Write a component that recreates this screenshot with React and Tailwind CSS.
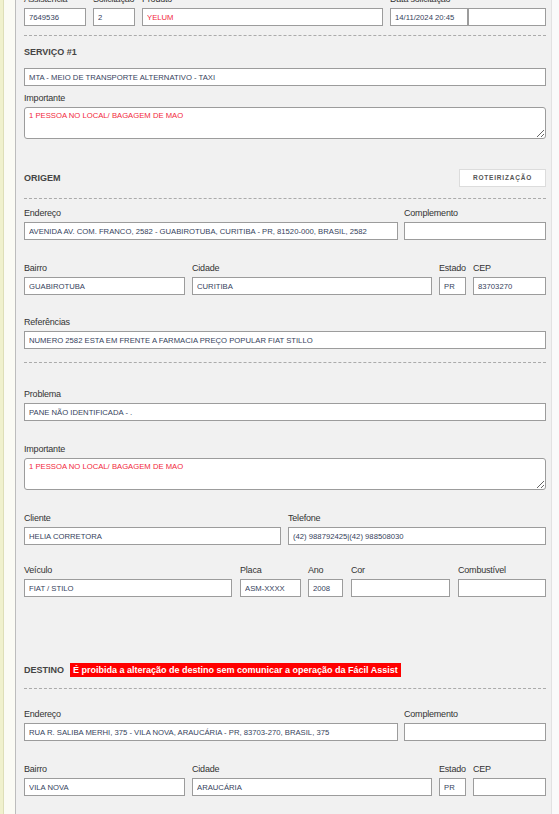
const Label = ({ children }) => (
  <div className="h-[12px] leading-[12px] text-[9px] tracking-[-0.2px] text-[#333] whitespace-nowrap">{children}</div>
);

const Box = ({ value = "", red = false, className = "" }) => (
  <input
    readOnly
    defaultValue={value}
    className={
      "block w-full h-[18px] border border-[#9c9c9c] bg-white px-[4px] text-[7.7px] outline-none " +
      (red ? "text-[#f2283c] " : "text-[#363f5c] ") +
      className
    }
  />
);

const Area = ({ value }) => (
  <textarea
    readOnly
    defaultValue={value}
    className="block w-full h-[32px] rounded-[3px] border border-[#9c9c9c] bg-white px-[4px] pt-[2px] text-[7.7px] leading-[11px] text-[#f2283c] outline-none"
  />
);

const Field = ({ label, value, red, className = "" }) => (
  <div className={"flex flex-col shrink-0 " + className}>
    <Label>{label}</Label>
    <div className="mt-[3px]">
      <Box value={value} red={red} />
    </div>
  </div>
);

const Dashed = ({ className = "" }) => (
  <div className={"border-t border-dashed border-[#ababab] " + className} />
);

const Heading = ({ children }) => (
  <div className="text-[9px] font-bold text-[#444] leading-[12px]">{children}</div>
);

export default function App() {
  return (
    <div className="flex min-h-[814px] w-full overflow-hidden font-['Liberation_Sans',Arial,sans-serif]">
      <div className="w-[3px] shrink-0 bg-[#f0f1cd]" />
      <div className="w-px shrink-0 bg-[#dedfb8]" />
      <div className="w-[11px] shrink-0 bg-[#fbfbf4]" />
      <div className="flex-1 border-x border-l-[#bdbdbd] border-r-[#e2e2e2] bg-[#f1f1f1] pl-[8px] pr-[5px] pb-[30px]">
        {/* top row */}
        <div className="mt-[-7px] flex">
          <Field label="Assistência" value="7649536" className="w-[62px]" />
          <Field label="Solicitação" value="2" className="w-[42px] ml-[7px]" />
          <Field label="Produto" value="YELUM" red className="w-[241px] ml-[7px]" />
          <div className="ml-[7px] flex flex-col">
            <Label>Data solicitação</Label>
            <div className="mt-[3px] flex">
              <div className="w-[78px]"><Box value="14/11/2024 20:45" /></div>
              <div className="w-[78px]"><Box /></div>
            </div>
          </div>
        </div>

        <Dashed className="mt-[9px]" />

        <div className="mt-[10px]"><Heading>SERVIÇO #1</Heading></div>
        <div className="mt-[10px]">
          <Box value="MTA - MEIO DE TRANSPORTE ALTERNATIVO - TAXI" />
        </div>
        <div className="mt-[6px]">
          <Label>Importante</Label>
          <div className="mt-[3px]"><Area value="1 PESSOA NO LOCAL/ BAGAGEM DE MAO" /></div>
        </div>

        {/* origem */}
        <div className="mt-[30px] flex h-[18px] items-center justify-between">
          <Heading>ORIGEM</Heading>
          <button className="h-[18px] w-[87px] border border-[#dcdcdc] bg-white text-[6.5px] font-bold tracking-[0.8px] text-[#555]">
            ROTEIRIZAÇÃO
          </button>
        </div>
        <Dashed className="mt-[11px]" />

        <div className="mt-[8px] flex">
          <Field label="Endereço" value="AVENIDA AV. COM. FRANCO, 2582 - GUABIROTUBA, CURITIBA - PR, 81520-000, BRASIL, 2582" className="w-[374px]" />
          <Field label="Complemento" className="w-[142px] ml-[6px]" />
        </div>
        <div className="mt-[22px] flex">
          <Field label="Bairro" value="GUABIROTUBA" className="w-[161px]" />
          <Field label="Cidade" value="CURITIBA" className="w-[240px] ml-[7px]" />
          <Field label="Estado" value="PR" className="w-[27px] ml-[7px]" />
          <Field label="CEP" value="83703270" className="w-[73px] ml-[7px]" />
        </div>
        <div className="mt-[21px]">
          <Field label="Referências" value="NUMERO 2582 ESTA EM FRENTE A FARMACIA PREÇO POPULAR FIAT STILLO" />
        </div>

        <Dashed className="mt-[13px]" />

        <div className="mt-[25px]">
          <Field label="Problema" value="PANE NÃO IDENTIFICADA - ." />
        </div>
        <div className="mt-[22px]">
          <Label>Importante</Label>
          <div className="mt-[3px]"><Area value="1 PESSOA NO LOCAL/ BAGAGEM DE MAO" /></div>
        </div>
        <div className="mt-[22px] flex">
          <Field label="Cliente" value="HELIA CORRETORA" className="w-[257px]" />
          <Field label="Telefone" value="(42) 988792425|(42) 988508030" className="w-[258px] ml-[7px]" />
        </div>
        <div className="mt-[19px] flex">
          <Field label="Veículo" value="FIAT / STILO" className="w-[208px]" />
          <Field label="Placa" value="ASM-XXXX" className="w-[61px] ml-[8px]" />
          <Field label="Ano" value="2008" className="w-[35px] ml-[7px]" />
          <Field label="Cor" className="w-[99px] ml-[8px]" />
          <Field label="Combustível" className="w-[88px] ml-[8px]" />
        </div>

        {/* destino */}
        <div className="mt-[66px] flex h-[14px] items-center">
          <Heading>DESTINO</Heading>
          <span className="ml-[6px] bg-[#ff0000] px-[3px] text-[9px] font-bold leading-[14px] text-white whitespace-nowrap">
            É proibida a alteração de destino sem comunicar a operação da Fácil Assist
          </span>
        </div>
        <Dashed className="mt-[11px]" />

        <div className="mt-[19px] flex">
          <Field label="Endereço" value="RUA R. SALIBA MERHI, 375 - VILA NOVA, ARAUCÁRIA - PR, 83703-270, BRASIL, 375" className="w-[374px]" />
          <Field label="Complemento" className="w-[142px] ml-[6px]" />
        </div>
        <div className="mt-[22px] flex">
          <Field label="Bairro" value="VILA NOVA" className="w-[161px]" />
          <Field label="Cidade" value="ARAUCÁRIA" className="w-[240px] ml-[7px]" />
          <Field label="Estado" value="PR" className="w-[27px] ml-[7px]" />
          <Field label="CEP" className="w-[73px] ml-[7px]" />
        </div>
      </div>
      <div className="w-[7px] shrink-0 bg-[#fafafa]" />
    </div>
  );
}
